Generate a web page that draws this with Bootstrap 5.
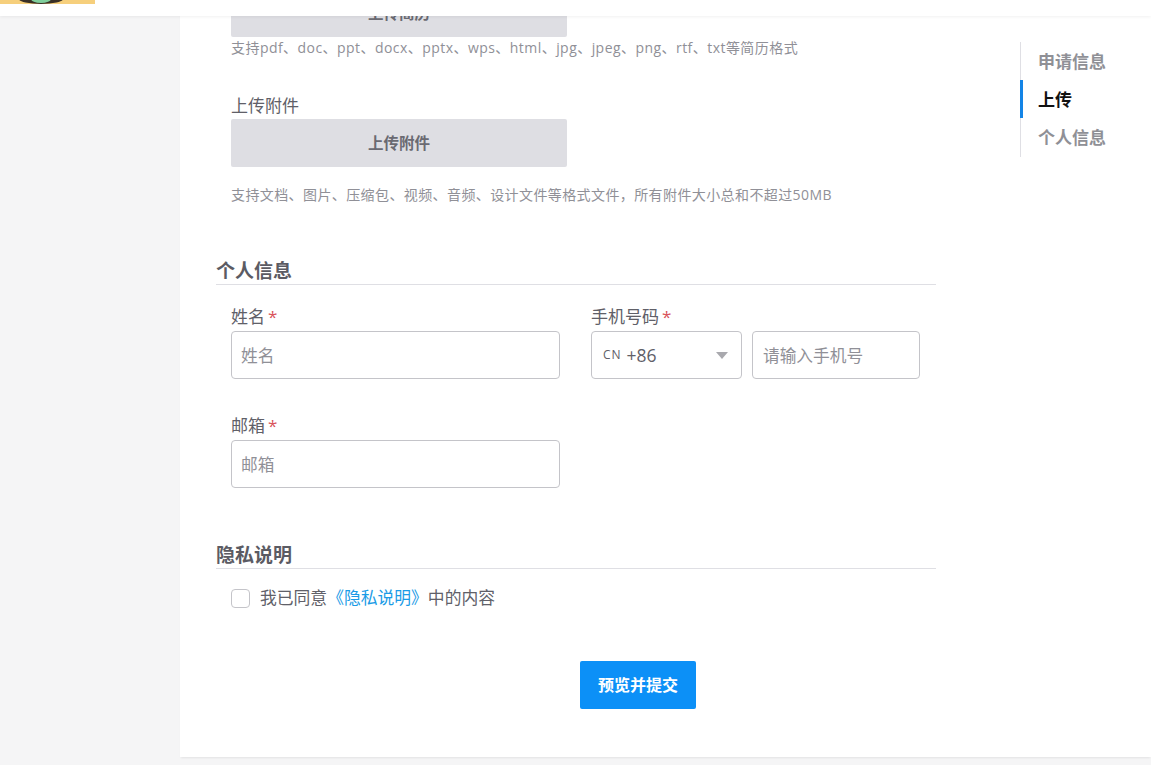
<!DOCTYPE html>
<html lang="zh-CN">
<head>
<meta charset="UTF-8">
<meta name="viewport" content="width=device-width, initial-scale=1.0">
<title>申请职位</title>
<link rel="stylesheet" href="https://cdn.jsdelivr.net/npm/bootstrap@5.3.0/dist/css/bootstrap.min.css">
<style>
    html, body { height: 100%; overflow: hidden; }
    body {
        background-color: #f5f5f6;
        font-family: "Open Sans", "Noto Sans CJK SC", sans-serif;
        color: #606068;
        font-size: 17px;
    }
    .top-strip {
        position: fixed;
        top: 0; left: 0; right: 0;
        height: 16px;
        background: #fff;
        box-shadow: 0 1px 3px rgba(0,0,0,.06);
        z-index: 10;
    }
    .logo-bit { display: block; width: 95px; height: 4px; }
    .sheet {
        margin: -11px 0 0 180px;
        height: 768px;
        background: #fff;
        box-shadow: 0 2px 2px -1px rgba(0,0,0,.08);
    }
    .form-col { width: 756px; flex: none; }
    .pad-block { padding: 0 0 0 51px; }
    .upload-btn {
        width: 336px;
        height: 48px;
        background: #dedee3;
        color: #6a6a72;
        font-size: 15.5px;
        font-weight: 700;
        border: 0;
        border-radius: 2px;
        line-height: 48px;
        padding: 0;
        text-align: center;
    }
    .upload-btn:hover { background: #dedee3; color: #6a6a72; }
    .hint { color: #909097; font-size: 14px; line-height: 22px; letter-spacing: .45px; }
    .hint-b { margin-top: 17px; letter-spacing: .4px; }
    .field-label { font-size: 17px; line-height: 24px; color: #606068; margin-bottom: 2px; }
    .req { color: #d9535a; margin-left: 3px; }
    .attach-label { margin-top: 34px; line-height: 26px; margin-bottom: 0; }
    .sec-title {
        width: 720px;
        margin-left: 36px;
        border-bottom: 1px solid #dfdfe4;
        font-size: 19px;
        font-weight: 700;
        color: #5b5b63;
        line-height: 28px;
        height: 28px;
    }
    .sec-one { margin-top: 51px; }
    .sec-two { margin-top: 53px; }
    .fields { padding-left: 51px; margin-top: 20px; }
    .fields-two { margin-top: 35px; }
    .fc-main, .fc-code, .fc-phone {
        height: 48px;
        border: 1px solid #c4c4c9;
        border-radius: 4px;
        font-size: 16.7px;
        color: #606068;
        padding: 0 9px;
    }
    .fc-main { width: 329px; }
    .fc-main::placeholder, .fc-phone::placeholder { color: #909097; }
    .fc-code { width: 151px; padding-left: 11px; }
    .fc-phone { width: 168px; padding-left: 10px; }
    .cn-tag { font-size: 12px; letter-spacing: 1px; margin-right: 5px; }
    .code-num { font-size: 17.5px; }
    .caret-down {
        margin-left: auto;
        margin-right: 4px;
        width: 0; height: 0;
        border-left: 6px solid transparent;
        border-right: 6px solid transparent;
        border-top: 7px solid #a9a9ae;
    }
    .col-gap { gap: 31px; }
    .phone-gap { gap: 10px; }
    .agree-row { padding-left: 51px; margin-top: 18px; height: 22px; font-size: 16.8px; }
    .agree-row label { line-height: 22px; }
    .agree-row .form-check-input {
        width: 19px; height: 19px;
        margin: 0 10px 0 0;
        border: 1px solid #c4c4c9;
        border-radius: 4px;
    }
    .agree-link { color: #1a9be6; text-decoration: none; }
    .submit-row { margin-top: 52px; padding-left: 400px; }
    .submit-btn {
        width: 116px;
        height: 48px;
        background: #0c90f7;
        border: 0;
        border-radius: 2px;
        color: #fff;
        font-size: 16px;
        font-weight: 700;
        padding: 0;
    }
    .side-nav {
        margin: 53px 0 0 84px;
        width: 110px;
        border-left: 1px solid #dfdfe4;
        height: 115px;
        align-self: flex-start;
    }
    .side-item {
        display: block;
        height: 38px;
        line-height: 40px;
        margin-left: -1px;
        padding-left: 15px;
        border-left: 3px solid transparent;
        font-size: 17px;
        font-weight: 700;
        color: #8f9096;
        text-decoration: none;
    }
    .side-item.on { color: #111; border-left-color: #1384e6; }
</style>
</head>
<body>
    <div class="top-strip">
        <svg class="logo-bit" viewBox="0 0 95 4">
            <rect width="95" height="4" fill="#f6cf7c"/>
            <ellipse cx="41" cy="-1" rx="22" ry="5" fill="#3a3026"/>
            <ellipse cx="41" cy="-1" rx="10" ry="4" fill="#7fcf9c"/>
        </svg>
    </div>

    <div class="sheet d-flex">
        <div class="form-col">
            <div class="pad-block">
                <button class="upload-btn d-block" type="button">上传简历</button>
                <div class="hint">支持pdf、doc、ppt、docx、pptx、wps、html、jpg、jpeg、png、rtf、txt等简历格式</div>
                <div class="field-label attach-label">上传附件</div>
                <button class="upload-btn d-block" type="button">上传附件</button>
                <div class="hint hint-b">支持文档、图片、压缩包、视频、音频、设计文件等格式文件，所有附件大小总和不超过50MB</div>
            </div>

            <div class="sec-title sec-one">个人信息</div>
            <div class="fields d-flex col-gap">
                <div>
                    <div class="field-label">姓名<span class="req">*</span></div>
                    <input class="form-control fc-main" type="text" placeholder="姓名">
                </div>
                <div>
                    <div class="field-label">手机号码<span class="req">*</span></div>
                    <div class="d-flex phone-gap">
                        <div class="fc-code d-flex align-items-center bg-white">
                            <span class="cn-tag">CN</span><span class="code-num">+86</span><span class="caret-down"></span>
                        </div>
                        <input class="form-control fc-phone" type="text" placeholder="请输入手机号">
                    </div>
                </div>
            </div>
            <div class="fields fields-two">
                <div class="field-label">邮箱<span class="req">*</span></div>
                <input class="form-control fc-main" type="text" placeholder="邮箱">
            </div>

            <div class="sec-title sec-two">隐私说明</div>
            <div class="agree-row d-flex align-items-center">
                <input class="form-check-input" type="checkbox" id="agree">
                <label for="agree">我已同意<a class="agree-link" href="#">《隐私说明》</a>中的内容</label>
            </div>

            <div class="submit-row">
                <button class="btn submit-btn" type="button">预览并提交</button>
            </div>
        </div>

        <nav class="side-nav">
            <a class="side-item" href="#">申请信息</a>
            <a class="side-item on" href="#">上传</a>
            <a class="side-item" href="#">个人信息</a>
        </nav>
    </div>
</body>
</html>
